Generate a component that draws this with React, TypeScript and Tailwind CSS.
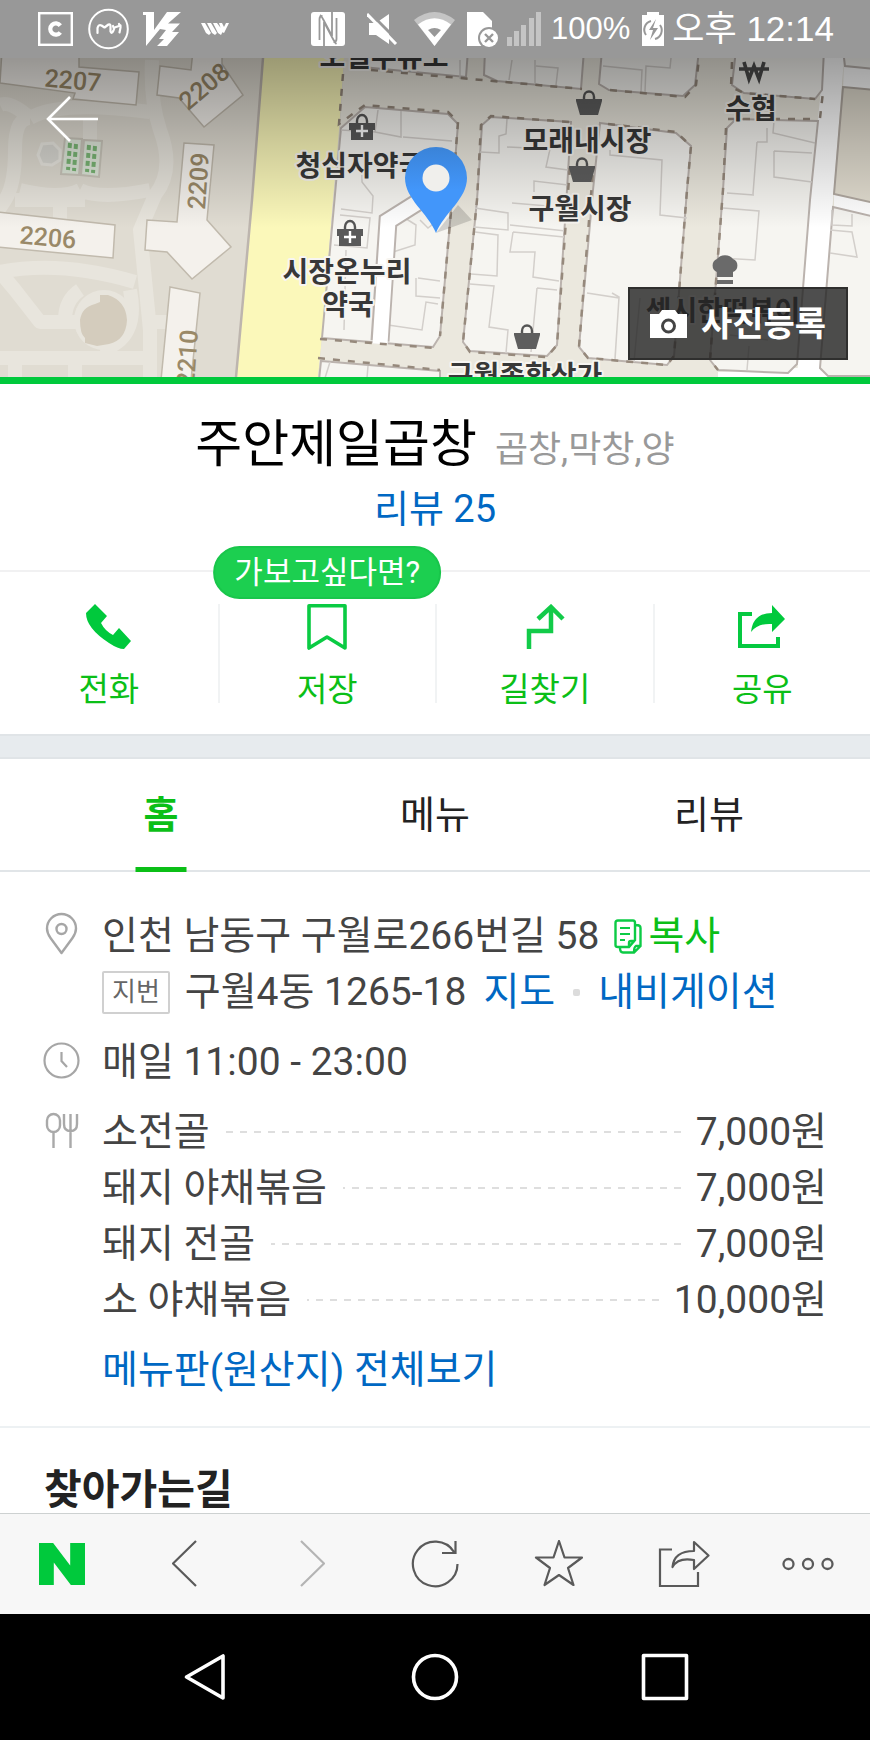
import type { ReactNode } from "react";
import { SiNaver } from "react-icons/si";

const FONT = "font-['Roboto','Noto_Sans_CJK_KR',sans-serif]";

function StatusBar() {
  return (
    <div className="flex h-[58px] shrink-0 items-center justify-between bg-[#989898] pr-[36px] pl-[38px] text-white">
      <div className="flex items-center">
        <svg width="35" height="34" viewBox="0 0 35 34" fill="none" aria-hidden="true">
          <rect x="1.2" y="1.2" width="32.600" height="31.600" stroke="#fff" strokeWidth="2.400" />
          <path d="M22.300 13.600A5.600 5.600 0 1 0 22.300 20.400" stroke="#fff" strokeWidth="4.200" />
        </svg>
        <svg className="ml-[15px]" width="41" height="42" viewBox="0 0 41 42" fill="none" stroke="#fff" aria-hidden="true">
          <circle cx="20.500" cy="21" r="19.300" strokeWidth="2" />
          <path d="M9.500 25v-5q1-4 4-2.500l3 2 4-3q2-1 2 2v5q1 3 3-1l1-3 6-2 0 2-1 5M25 18l1 3M31 16l1 2" strokeWidth="2.200" strokeLinejoin="round" strokeLinecap="round" />
        </svg>
        <svg className="ml-[14px]" width="38" height="34" viewBox="0 0 38 34" fill="#fff" aria-hidden="true">
          <path d="M0 0H11V18L24 0H38L25 11.500H37L29 20H36L24 34H14L21 27H16L23 18L17 17L3 34V3H0Z" />
        </svg>
        <svg className="ml-[20px]" width="28" height="12" viewBox="0 0 28 12" fill="#fff" aria-hidden="true">
          <path d="M0 0H4L10 10L8 12L5 10ZM6 0H10L16 10L14 12L11 10ZM12 0H16L22 8L20 12L17 10ZM18 0H21L23 4L25 0H28L23 10L21 9Z" />
        </svg>
      </div>
      <div className="flex items-center">
        <svg width="34" height="34" viewBox="0 0 34 34" aria-hidden="true">
          <rect width="34" height="34" rx="3" fill="#fff" />
          <path d="M8.500 28V7q0-3 3-3M13 34V10L22 27q2 4 3.500 5M25.500 6v21q0 3-3 3M21 0V24L12 7q-1.500-3-3-4" fill="none" stroke="#989898" strokeWidth="1.800" />
        </svg>
        <svg className="ml-[22px]" width="31" height="32" viewBox="0 0 31 32" aria-hidden="true">
          <path d="M2 10H9L22 1V31L9 22H2Z" fill="#fff" />
          <path d="M3 0L32 29" stroke="#989898" strokeWidth="3" />
          <path d="M0 1L29 31" stroke="#fff" strokeWidth="3" />
        </svg>
        <svg className="ml-[16px]" width="41" height="34" viewBox="0 0 41 34" aria-hidden="true">
          <path d="M0 8Q20.500-8 41 8L20.500 34Z" fill="#c4c4c4" />
          <path d="M4 12.500Q20.500 0 37 12.500L20.500 34Z" fill="#fff" />
          <path d="M14 18q6.500-4 13 0l-6.500 7z" fill="#989898" />
        </svg>
        <svg className="ml-[12px]" width="32" height="35" viewBox="0 0 32 35" aria-hidden="true">
          <path d="M0 0H16L25 9V34H0Z" fill="#fff" />
          <circle cx="22" cy="26" r="11" fill="#989898" />
          <circle cx="22" cy="26" r="9" fill="#fff" />
          <path d="M18 22l8 8m0-8l-8 8" stroke="#989898" strokeWidth="2.400" />
        </svg>
        <svg className="ml-[8px]" width="34" height="34" viewBox="0 0 34 34" fill="#c4c4c4" aria-hidden="true">
          <path d="M0 25h5v9H0zM7 19h5v15H7zM14 13h5v21h-5zM22 6h5v28h-5zM29 0h5v34h-5z" />
        </svg>
        <span className="ml-[10px] font-['Liberation_Sans',sans-serif] text-[31px] leading-[40px]">100%</span>
        <svg className="ml-[12px]" width="22" height="34" viewBox="0 0 22 34" aria-hidden="true">
          <path d="M0 3H5V0H17V3H22V34H0Z" fill="#fff" />
          <path d="M9 9a9 9 0 0 0-5 14M13 27a9 9 0 0 0 5-14" fill="none" stroke="#989898" strokeWidth="2" />
          <path d="M14 7L7 18h4l-3 10 8-12h-5z" fill="#989898" />
        </svg>
        <span className="ml-[8px] font-['Liberation_Sans','Noto_Sans_CJK_KR',sans-serif] text-[35px] leading-[40px]">오후 12:14</span>
      </div>
    </div>
  );
}

function Basket({ x, y }: { x: number; y: number }) {
  return (
    <g transform={`translate(${x} ${y})`}>
      <path d="M-5-4v-3a5 5.500 0 0 1 10 0v3" fill="none" stroke="#555" strokeWidth="2.400" />
      <path d="M-13-5H13V-3L9 11H-9L-13-3Z" fill="#5e5e5e" />
    </g>
  );
}

function Pharmacy({ x, y }: { x: number; y: number }) {
  return (
    <g transform={`translate(${x} ${y})`}>
      <path d="M-5-6v-2a5 6 0 0 1 10 0v2" fill="none" stroke="#555" strokeWidth="2.400" />
      <path d="M-13-6H13V1H11V11H-11V1H-13Z" fill="#5a5a5a" />
      <path d="M-6 2H6M0-4V8" stroke="#fff" strokeWidth="2.400" />
    </g>
  );
}

const BLOCKS = [
  "M350 50L352 66L466 77L468 50Z",
  "M485 50L484 75L497 81L581 89L584 50Z",
  "M602 50L599 84L609 90L683 96L695 85L699 50Z",
  "M736 50L732 85L744 93L815 99L822 90L824 50Z",
  "M843 50L845 66L875 69V50Z",
  "M341 128L365 107L448 114L458 124L452 200L440 336L433 347L322 338Z",
  "M482 125L491 117L571 122L567 190L557 345L547 356L470 351L463 342L477 200Z",
  "M600 123L676 133L691 146L687 190L674 356L667 365L588 358L579 347L593 190Z",
  "M727 128L736 119L818 121L810 200L797 364L788 373L718 370L710 360L723 190Z",
  "M833 207L875 217V376L828 376L820 368Z",
  "M321 361L440 371V380H319Z",
];

const PARCELS =
  "M378 110L375 132L341 130M401 111V137L375 132M403 137L452 141M362 172V182L373 196L372 213L341 209M340 215L370 218L367 248L334 245M346 250L344 330M460 60V79M512 60L509 80M535 60V83M536 66L558 68L556 85M603 66L642 70L641 92M645 92L646 66L670 68L671 58M507 119L506 134L499 136V153L480 152M507 147L550 149L546 167L568 170M568 185L534 181V192M610 150V155L662 160L660 215L687 218M612 293L619 297L615 360M475 208L508 213V230L474 227M512 203L548 206M510 225L566 231M475 232L498 235L497 276L471 274M513 232L564 237M513 232L510 252L535 252L533 277L559 281M470 284L494 286L489 327L508 330L506 353M537 288L531 352M537 288L557 290M587 293L619 298L615 358M640 298L634 362M727 193L754 195M723 208L759 211L755 260L720 258M774 121L773 133L815 143M774 151L812 153M774 151V177L812 182M757 142L753 194M767 128V142L757 142M730 335L768 340M749 346L747 370M397 218L390 255M400 215L416 225L415 245L393 252M418 278L440 281M416 278V296L440 298M388 325L422 330L426 302L438 304M420 220L428 228L438 220M830 230L852 232L857 257L830 253M832 210V225L852 226V214M330 362L325 378M368 366L367 378";

const PATHS =
  "M30 118Q15 118 15 150Q15 185 5 200L-5 215M30 118Q60 100 150 112M152 60Q150 100 160 130Q175 170 155 195L140 230L150 330L150 380M0 272Q60 260 135 282M0 272L15 290L40 322H80M60 200V225M80 190Q100 200 150 190M20 190Q60 200 80 190M15 200L85 200M150 322H175M0 358H150M75 360V380M15 360V380M90 118V140M65 320Q65 300 80 290M130 290Q140 340 100 350M0 105Q10 100 30 118";

function Label({ x, y, children }: { x: number; y: number; children: string }) {
  return (
    <text x={x} y={y} textAnchor="middle" fontSize="28" fontWeight="700" fill="#383838" stroke="#f7f5f1" strokeWidth="4" strokeLinejoin="round" paintOrder="stroke">
      {children}
    </text>
  );
}

function BuildingNo({ x, y, turn, children }: { x: number; y: number; turn: number; children: string }) {
  return (
    <text x="0" y="9" transform={`translate(${x} ${y}) rotate(${turn})`} textAnchor="middle" fontSize="25" fontWeight="500" fill="#9a8968">
      {children}
    </text>
  );
}

function PlaceMap() {
  return (
    <div className="relative h-[326px] shrink-0 overflow-hidden border-b-[7px] border-[#00c93c]">
      <svg className="block h-full w-full" viewBox="0 58 870 319" preserveAspectRatio="xMidYMid slice" role="img" aria-label="지도">
        <defs>
          <linearGradient id="shade" x1="0" y1="0" x2="0" y2="1">
            <stop offset="0" stopColor="#000" stopOpacity="0.38" />
            <stop offset="0.5" stopColor="#000" stopOpacity="0.18" />
            <stop offset="1" stopColor="#000" stopOpacity="0" />
          </linearGradient>
          <linearGradient id="pin" x1="0" y1="0" x2="0" y2="1">
            <stop offset="0" stopColor="#3a83d8" />
            <stop offset="0.5" stopColor="#4296fa" />
          </linearGradient>
        </defs>
        <rect y="58" width="870" height="319" fill="#e0dcd2" />
        <path d={PATHS} fill="none" stroke="#e8e5dd" strokeWidth="14" strokeLinejoin="round" />
        <circle cx="104" cy="320" r="30" fill="#e8e5dd" />
        <path d="M100 295h8q18 6 19 25q-1 20-18 24l-12 2l-12-3v-5q-5-4-5-18q2-13 15-16l5-2z" fill="#d4ccbd" />
        <path d="M42 144l11-1 7 7v10l-8 5-10-1-4-9z" fill="#d9d8d2" stroke="#e9e7e0" strokeWidth="3" />
        <path d="M65 138L82 139L79 175L61 174ZM84 140L102 141L99 177L81 175Z" fill="#dfe8da" stroke="#c9c5ba" strokeWidth="2" />
        <path d="M70 143L68 170M76 144L74 171M89 145L87 172M95 146L93 173" stroke="#79b574" strokeWidth="4" strokeDasharray="5 3" />
        <g fill="#f4f1ec" stroke="#c1baad" strokeWidth="1.500">
          <path d="M2 50L0 83L75 93L73 99L136 105L139 72L79 67V50Z" />
          <path d="M160 66L191 70L193 50H222V64L243 95L204 127L179 98L157 95Z" />
          <path d="M184 143L214 145L207 220L231 247L192 279L167 252L145 250L147 220L177 222Z" />
          <path d="M-2 212L115 225L113 258L-2 247Z" />
          <path d="M170 287L200 293L191 380H161Z" />
        </g>
        <path d="M263 58H344L339 130L333 200L329 250L322 338L318 377H236L252 200Z" fill="#fbf8ba" />
        <path d="M263 58L252 200L236 377" fill="none" stroke="#bdb5ae" strokeWidth="2.500" />
        <path d="M344 58H870V377H318L322 338L333 200L340 128Z" fill="#ebe8de" />
        <path d="M824 58H844L833 200L820 377H797L810 200ZM718 372L797 368L828 371V377H718Z" fill="#fff" />
        <path d="M844 58H870V92H843ZM870 165L834 190V208L870 217Z" fill="#fff" />
        <g fill="#f6f5f1" stroke="#bbb3ae" strokeWidth="2">
          {BLOCKS.map((d) => (
            <path key={d} d={d} />
          ))}
        </g>
        <path d="M843 87L875 90V203L834 194Z" fill="#e2ddd0" stroke="#b0a8a0" strokeWidth="2" />
        <path d={PARCELS} fill="none" stroke="#d3cfcb" strokeWidth="1.500" />
        <path d="M450 182L388 221L380 341" fill="none" stroke="#bbb3ae" strokeWidth="19" />
        <path d="M450 182L388 221L380 344" fill="none" stroke="#fff" strokeWidth="15" />
        <path
          d="M343 74L339 124L365 105L448 112L458 122L452 200L440 336M371 70L582 89M610 90L685 97L696 85L699 58M732 62L731 87L744 93L815 99M820 118L823 92M320 339L435 348M318 358L440 370M569 122L491 116L481 125L477 200L463 342L470 352L547 357L557 345L570 165M728 119L817 119M726 128L723 190L710 360L718 370M608 124L676 132L691 146L687 190L674 356L667 365L588 358L579 347L593 170"
          fill="none"
          stroke="#96897c"
          strokeWidth="2.500"
          strokeDasharray="7 8"
        />
        <g className="font-['Noto_Sans_CJK_KR',sans-serif]">
          <Label x={384} y={67}>오일주유소</Label>
          <Label x={360} y={176}>청십자약국</Label>
          <Label x={587} y={151}>모래내시장</Label>
          <Label x={580} y={219}>구월시장</Label>
          <Label x={751} y={119}>수협</Label>
          <Label x={347} y={282}>시장온누리</Label>
          <Label x={348} y={315}>약국</Label>
          <Label x={525} y={386}>구월종합상가</Label>
          <Label x={723} y={321}>섹시한떡볶이</Label>
        </g>
        <Pharmacy x={362} y={129} />
        <Pharmacy x={350} y={235} />
        <Basket x={589} y={104} />
        <Basket x={582} y={171} />
        <Basket x={527} y={338} />
        <path d="M744 62L749 79L754 66L759 79L764 62M739 69H769" fill="none" stroke="#4d4d4d" strokeWidth="3.600" />
        <path d="M717 277v-5a7 7 0 0 1 0-13a9 7 0 0 1 16 0a7 7 0 0 1 0 13v5zM717 280h16v4h-16z" fill="#6a6a6a" />
        <g className="font-['Roboto',sans-serif]">
          <BuildingNo x={73} y={80} turn={5}>2207</BuildingNo>
          <BuildingNo x={204} y={86} turn={-40}>2208</BuildingNo>
          <BuildingNo x={198} y={181} turn={-86}>2209</BuildingNo>
          <BuildingNo x={48} y={237} turn={5}>2206</BuildingNo>
          <BuildingNo x={187} y={358} turn={-86}>2210</BuildingNo>
        </g>
        <rect y="58" width="870" height="170" fill="url(#shade)" />
        <path d="M436 233L458 205L472 220L450 228Z" fill="#000" opacity="0.150" />
        <path d="M436 233C428 213 405 199 405 178a31 31 0 0 1 62 0C467 199 444 213 436 233Z" fill="url(#pin)" />
        <circle cx="436" cy="178" r="13.500" fill="#f0efec" />
      </svg>
      <button type="button" aria-label="뒤로" className="absolute top-[36px] left-[44px] p-0">
        <svg width="56" height="50" viewBox="0 0 56 50" fill="none" stroke="#fff" strokeWidth="2.600" aria-hidden="true">
          <path d="M54 25H4M26 3L4 25L26 47" />
        </svg>
      </button>
      <button type="button" className="absolute right-[22px] bottom-[17px] flex h-[73px] items-center gap-[14px] border-2 border-[#2f2f2e] bg-[#222]/80 px-[20px] text-[34px] leading-[40px] font-bold text-white">
        <svg width="37" height="28" viewBox="0 0 37 28" aria-hidden="true">
          <path d="M0 4H9L12 0H25L28 4H37V28H0Z" fill="#fff" />
          <circle cx="18.500" cy="16" r="6" fill="none" stroke="#444" strokeWidth="3" />
        </svg>
        사진등록
      </button>
    </div>
  );
}

function Action({ label, divider, badge, children }: { label: string; divider: boolean; badge?: string; children: ReactNode }) {
  return (
    <li className={divider ? "relative border-l-2 border-[#f1f3f4]" : "relative"}>
      <button type="button" className="flex h-[99px] w-full flex-col items-center justify-between text-[33px] leading-[27px] text-[#0bbf17]">
        {children}
        {label}
      </button>
      {badge && (
        <span className="absolute bottom-[104px] left-1/2 -translate-x-1/2 rounded-full border-2 border-[#19c64b] bg-[#1ccf50] px-[19px] text-[31px] leading-[49px] whitespace-nowrap text-white">
          {badge}
        </span>
      )}
    </li>
  );
}

function Actions() {
  return (
    <ul className="grid grid-cols-4 border-t-2 border-[#f1f1f2] pt-8 pb-[31px]">
      <Action label="전화" divider={false}>
        <svg width="46" height="46" viewBox="0 0 46 46" fill="#00c93c" aria-hidden="true">
          <path d="M9 0L21 12L15 19Q19 27 27 31L33 24L45 37L38 45Q32 45 23 39Q0 24 0 9Z" />
        </svg>
      </Action>
      <Action label="저장" divider badge="가보고싶다면?">
        <svg width="40" height="46" viewBox="0 0 40 46" fill="none" stroke="#0acb43" strokeWidth="3.600" strokeLinejoin="round" aria-hidden="true">
          <path d="M2 1.800H38V44L20 33L2 44Z" />
        </svg>
      </Action>
      <Action label="길찾기" divider>
        <svg width="40" height="46" viewBox="0 0 40 46" fill="none" stroke="#12cb49" strokeWidth="4.500" aria-hidden="true">
          <path d="M4 45V27H26V3M13 15L26 3L38 15" />
        </svg>
      </Action>
      <Action label="공유" divider>
        <svg width="50" height="46" viewBox="0 0 50 46" aria-hidden="true">
          <path d="M15 10H3V42H41V33" fill="none" stroke="#05c940" strokeWidth="4" />
          <path d="M35 1L48 15L35 28V20Q21 19 14 28Q16 9 35 9Z" fill="#00c93c" />
        </svg>
      </Action>
    </ul>
  );
}

function Tabs() {
  const tabs = ["홈", "메뉴", "리뷰"];
  return (
    <div role="tablist" className="grid grid-cols-3 border-b-2 border-[#e1e5e8] px-6">
      {tabs.map((tab, i) => (
        <button
          key={tab}
          type="button"
          role="tab"
          aria-selected={i === 0}
          className={
            i === 0
              ? "relative h-[111px] text-[38px] leading-[56px] font-bold text-[#0bbf17]"
              : "relative h-[111px] text-[38px] leading-[56px] text-[#222]"
          }
        >
          {tab}
          {i === 0 && <span className="absolute -bottom-[2px] left-1/2 h-[5px] w-[51px] -translate-x-1/2 bg-[#0bbf17]" />}
        </button>
      ))}
    </div>
  );
}

const MENU = [
  { name: "소전골", price: "7,000원" },
  { name: "돼지 야채볶음", price: "7,000원" },
  { name: "돼지 전골", price: "7,000원" },
  { name: "소 야채볶음", price: "10,000원" },
];

function InfoRow({ icon, children }: { icon: ReactNode; children: ReactNode }) {
  return (
    <div className="flex">
      <div className="flex h-[52px] w-[59px] shrink-0 items-center">{icon}</div>
      <div className="min-w-0 flex-1">{children}</div>
    </div>
  );
}

function Info() {
  return (
    <section className="flex flex-col gap-[14px] border-b-2 border-[#edf1f3] pt-[36px] pr-[43px] pb-[28px] pl-[43px] text-[39px] leading-[56px] text-[#444]">
      <InfoRow
        icon={
          <svg width="37" height="44" viewBox="0 0 37 44" fill="none" stroke="#a6a6a6" strokeWidth="2.400" aria-hidden="true">
            <path d="M18.500 41L7.500 26Q4 21 4 16.500a14.500 14.500 0 0 1 29 0Q33 21 29.500 26Z" strokeLinejoin="round" />
            <circle cx="18.500" cy="17" r="5" />
          </svg>
        }
      >
        <div className="flex items-center">
          <span>인천 남동구 구월로266번길 58</span>
          <button type="button" className="ml-[15px] flex items-center gap-[6px] text-[#0bbf17]">
            <svg width="28" height="35" viewBox="0 0 28 35" fill="none" stroke="#0ccb45" strokeWidth="2.400" aria-hidden="true">
              <path d="M4 1.500H19Q21 1.500 21 4V21L15 28H4Q1.500 28 1.500 26V4Q1.500 1.500 4 1.500ZM21 22H17Q15 22 15 24V28M22 6Q26.500 6 26.500 9V27L20 33.500H9Q6 33.500 6 29M26 27H22Q20 28 20 33" />
              <path d="M6 9H16M6 15H16M6 21H11" strokeWidth="2" />
            </svg>
            복사
          </button>
        </div>
        <div className="flex items-center">
          <span className="mr-[15px] rounded-[2px] border-2 border-[#d0d0d0] px-[8px] text-[26px] leading-[39px] text-[#666]">지번</span>
          <span>구월4동 1265-18</span>
          <a href="#map" className="ml-[17px] text-[#0068c3]">지도</a>
          <span className="mx-[18px] size-[7px] rounded-[2px] bg-[#dcdcdc]" />
          <a href="#navigation" className="text-[#0068c3]">내비게이션</a>
        </div>
      </InfoRow>
      <InfoRow
        icon={
          <svg width="37" height="37" viewBox="0 0 37 37" fill="none" stroke="#a6a6a6" strokeWidth="2.200" aria-hidden="true">
            <circle cx="18.500" cy="18.500" r="17" />
            <path d="M18.500 10V19L24 25" />
          </svg>
        }
      >
        매일 11:00 - 23:00
      </InfoRow>
      <InfoRow
        icon={
          <svg width="37" height="36" viewBox="0 0 37 36" fill="none" stroke="#a9a9a9" strokeWidth="2.400" aria-hidden="true">
            <rect x="4" y="2" width="13" height="18" rx="6.500" />
            <path d="M10.500 20V36M21 2V12Q21 19 27.500 19Q34 19 34 12V2M27.500 2V36" />
          </svg>
        }
      >
        <ul>
          {MENU.map((item) => (
            <li key={item.name} className="flex items-center">
              <span>{item.name}</span>
              <span className="mr-[15px] ml-[16px] h-[2px] flex-1 bg-[repeating-linear-gradient(270deg,#dedede_0_7px,transparent_7px_14px)]" />
              <span>{item.price}</span>
            </li>
          ))}
        </ul>
        <a href="#menu" className="mt-[14px] block text-[#0068c3]">메뉴판(원산지) 전체보기</a>
      </InfoRow>
    </section>
  );
}

function Tool({ label, children }: { label: string; children: ReactNode }) {
  return (
    <button type="button" aria-label={label} className="flex items-center justify-center">
      {children}
    </button>
  );
}

function BrowserBar() {
  return (
    <nav className="grid h-[101px] shrink-0 grid-cols-7 border-t border-[#cdd1d1] bg-[#f7f7f7]">
      <Tool label="네이버">
        <SiNaver preserveAspectRatio="none" color="#00c93c" className="h-[42px] w-[46px]" />
      </Tool>
      <Tool label="이전">
        <svg width="28" height="48" viewBox="0 0 28 48" fill="none" stroke="#5a5a5a" strokeWidth="2.200" aria-hidden="true">
          <path d="M24 1L1 23.500L24 46" />
        </svg>
      </Tool>
      <Tool label="다음">
        <svg width="28" height="48" viewBox="0 0 28 48" fill="none" stroke="#b4b4b4" strokeWidth="2.200" aria-hidden="true">
          <path d="M4 1L27 23.500L4 46" />
        </svg>
      </Tool>
      <Tool label="새로고침">
        <svg width="48" height="48" viewBox="0 0 48 48" fill="none" stroke="#5a5a5a" strokeWidth="2.200" aria-hidden="true">
          <path d="M46.500 24A22.300 22.300 0 1 1 43 12M44.500 1V13H31" />
        </svg>
      </Tool>
      <Tool label="즐겨찾기">
        <svg width="50" height="48" viewBox="0 0 50 48" fill="none" stroke="#5a5a5a" strokeWidth="2.200" strokeLinejoin="round" aria-hidden="true">
          <path d="M25 1L30.500 17.500H48L34 28L39.500 45L25 35L10.500 45L16 28L2 17.500H19.500Z" />
        </svg>
      </Tool>
      <Tool label="공유하기">
        <svg width="52" height="48" viewBox="0 0 52 48" fill="none" stroke="#5a5a5a" strokeWidth="2.200" aria-hidden="true">
          <path d="M14 9.500H2V46H40V32" />
          <path d="M36 2L50.500 15.500L36 29V20Q20 17 14.500 27Q16 11 36 11Z" strokeLinejoin="round" />
        </svg>
      </Tool>
      <Tool label="더보기">
        <svg width="52" height="14" viewBox="0 0 52 14" fill="none" stroke="#5a5a5a" strokeWidth="2.300" aria-hidden="true">
          <circle cx="6.500" cy="7" r="5" />
          <circle cx="26" cy="7" r="5" />
          <circle cx="45.500" cy="7" r="5" />
        </svg>
      </Tool>
    </nav>
  );
}

function SystemBar() {
  return (
    <nav className="grid h-[126px] shrink-0 grid-cols-3 bg-black px-[90px]">
      <Tool label="뒤로 가기">
        <svg width="42" height="48" viewBox="0 0 42 48" fill="none" stroke="#fff" strokeWidth="3.600" strokeLinejoin="round" aria-hidden="true">
          <path d="M39 3V45L2.500 24Z" />
        </svg>
      </Tool>
      <Tool label="홈 화면">
        <svg width="48" height="48" viewBox="0 0 48 48" fill="none" stroke="#fff" strokeWidth="3.600" aria-hidden="true">
          <circle cx="24" cy="24" r="21.500" />
        </svg>
      </Tool>
      <Tool label="최근 앱">
        <svg width="48" height="48" viewBox="0 0 48 48" fill="none" stroke="#fff" strokeWidth="3.600" strokeLinejoin="round" aria-hidden="true">
          <rect x="2.500" y="2.500" width="43" height="43" />
        </svg>
      </Tool>
    </nav>
  );
}

export default function App() {
  return (
    <div lang="ko" className={`flex h-screen flex-col bg-white ${FONT}`}>
      <StatusBar />
      <main className="min-h-0 flex-1 overflow-hidden">
        <PlaceMap />
        <header className="flex flex-col items-center gap-[10px] pt-[31px] pb-[37px]">
          <div className="flex items-baseline gap-[18px]">
            <h1 className="text-[51px] leading-[60px] text-black">주안제일곱창</h1>
            <span className="text-[36px] leading-[48px] text-[#999]">곱창,막창,양</span>
          </div>
          <a href="#reviews" className="text-[38px] leading-[48px] text-[#0068c3]">리뷰 25</a>
        </header>
        <Actions />
        <div className="h-[25px] border-y-2 border-[#e0e4e7] bg-[#e7ebee]" />
        <Tabs />
        <Info />
        <section className="px-[44px] pt-[34px]">
          <h2 className="text-[41px] leading-[56px] font-bold text-[#222]">찾아가는길</h2>
        </section>
      </main>
      <BrowserBar />
      <SystemBar />
    </div>
  );
}
